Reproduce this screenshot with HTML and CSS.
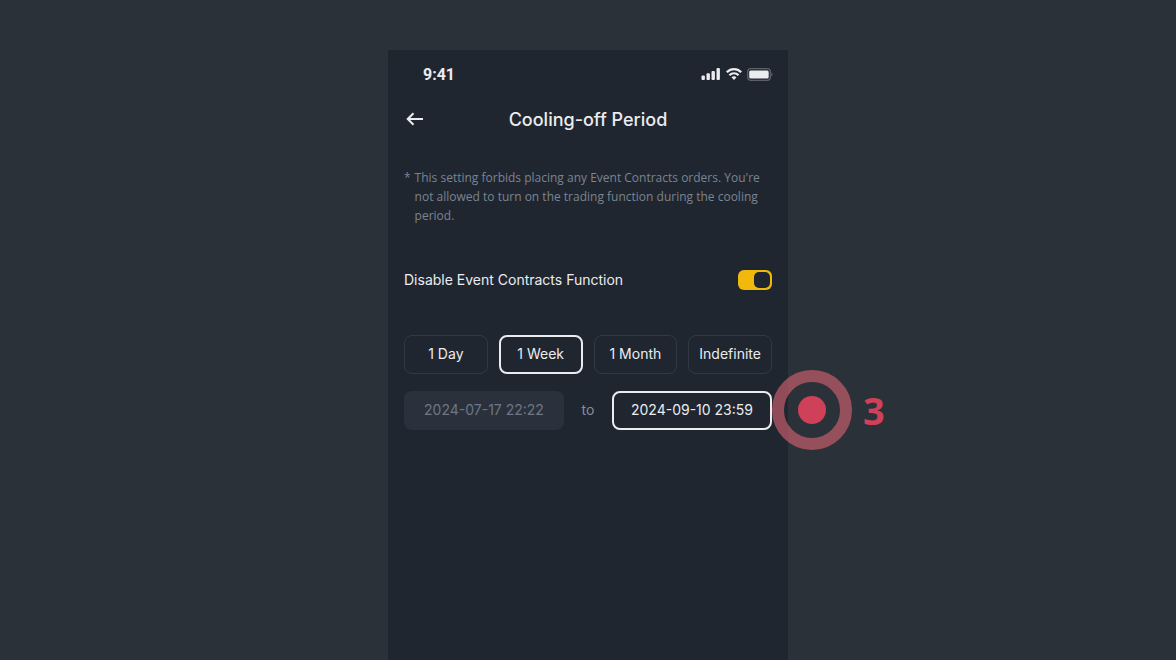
FILE: index.html
```html
<!DOCTYPE html>
<html lang="en">
<head>
    <meta charset="UTF-8">
    <meta name="viewport" content="width=device-width, initial-scale=1.0">
    <title>Cooling-off Period</title>
    <link rel="stylesheet" href="styles.css">
</head>
<body>
    <main class="phone">
        <div class="status-bar">
            <span class="time">9:41</span>
            <div class="status-icons">
                <svg width="20" height="12" viewBox="0 0 20 12" fill="currentColor" aria-hidden="true">
                    <rect x="0.5" y="7.5" width="3.4" height="4.5" rx="1"/>
                    <rect x="5.5" y="5.3" width="3.4" height="6.7" rx="1"/>
                    <rect x="10.5" y="3" width="3.4" height="9" rx="1"/>
                    <rect x="15.5" y="0" width="3.4" height="12" rx="1"/>
                </svg>
                <svg width="16" height="12" viewBox="0 0 16 12" fill="none" stroke="currentColor" stroke-width="2.2" aria-hidden="true">
                    <path d="M0.8 4.3C4.9 0.1 11.1 0.1 15.2 4.3"/>
                    <path d="M3.4 7.2C6 4.6 10 4.6 12.6 7.2"/>
                    <path d="M5.5 9.3C7 7.9 9 7.9 10.5 9.3L8 11.9Z" fill="currentColor" stroke="none"/>
                </svg>
                <svg width="26" height="13" viewBox="0 0 26 13" aria-hidden="true">
                    <rect x="0.7" y="0.7" width="22.6" height="11.6" rx="3" fill="none" stroke="#5c6068" stroke-width="1.3"/>
                    <rect x="2.2" y="2.5" width="19.5" height="8" rx="1.5" fill="currentColor"/>
                    <path d="M24.3 4.5C26 5.2 26 7.8 24.3 8.5Z" fill="#5c6068"/>
                </svg>
            </div>
        </div>

        <header class="title-bar">
            <button type="button" class="back-button" aria-label="Back">
                <svg width="18" height="14" viewBox="0 0 18 14" fill="none" stroke="currentColor" stroke-width="2" aria-hidden="true">
                    <path d="M17 7H2M7.5 1.2L1.7 7L7.5 12.8"/>
                </svg>
            </button>
            <h1>Cooling-off Period</h1>
        </header>

        <div class="note">
            <span>*</span>
            <p>This setting forbids placing any Event Contracts orders. You're not allowed to turn on the trading function during the cooling period.</p>
        </div>

        <div class="toggle-row">
            <label for="disable-function">Disable Event Contracts Function</label>
            <input type="checkbox" id="disable-function" class="toggle" checked>
        </div>

        <div class="period-options">
            <button type="button">1 Day</button>
            <button type="button" class="selected">1 Week</button>
            <button type="button">1 Month</button>
            <button type="button">Indefinite</button>
        </div>

        <div class="date-row">
            <input type="text" class="date" value="2024-07-17 22:22" aria-label="Start date" disabled>
            <span class="to">to</span>
            <input type="text" class="date date-end" value="2024-09-10 23:59" aria-label="End date">
            <div class="marker">
                <span class="ring"></span>
                <span class="step">3</span>
            </div>
        </div>
    </main>
</body>
</html>
```
FILE: styles.css
```css
:root {
    --page-color: #2b3138;
    --phone-color: #20262f;
    --text-color: #eaecef;
    --muted-color: #848e9c;
    --border-color: #333944;
    --yellow: #f0b90b;
    --red: #cf4158;
}

* {
    box-sizing: border-box;
}

body {
    margin: 0;
    padding-top: 50px;
    background-color: var(--page-color);
    color: var(--text-color);
    font-family: 'Inter', sans-serif;
    font-size: 14px;
}

button, input {
    font: inherit;
    color: inherit;
}

.phone {
    max-width: 400px;
    min-height: calc(100vh - 50px);
    margin: 0 auto;
    padding: 14px 16px;
    background-color: var(--phone-color);
}

/* --- Status Bar --- */
.status-bar {
    display: flex;
    justify-content: space-between;
    align-items: center;
    height: 20px;
    margin-right: -1px;
    padding-left: 19px;
}

.time {
    font-family: 'Roboto', sans-serif;
    font-size: 16px;
    font-weight: 700;
}

.status-icons {
    display: flex;
    align-items: center;
    gap: 5px;
}

/* --- Title --- */
.title-bar {
    display: grid;
    grid-template-columns: 24px 1fr 24px;
    align-items: center;
    height: 30px;
    margin-top: 20px;
}

.back-button {
    display: flex;
    padding: 2px;
    border: none;
    background: none;
    cursor: pointer;
}

h1 {
    margin: 0;
    font-size: 18px;
    font-weight: 500;
    text-align: center;
}

.note {
    display: flex;
    gap: 4px;
    margin-top: 34px;
    color: #7b8491;
    font-family: 'Open Sans', sans-serif;
    font-size: 12px;
    line-height: 19px;
}

.note p {
    margin: 0;
}

/* --- Toggle --- */
.toggle-row {
    display: flex;
    justify-content: space-between;
    align-items: center;
    height: 20px;
    margin-top: 45px;
}

.toggle-row label {
    padding-bottom: 2px;
}

.toggle {
    appearance: none;
    display: flex;
    justify-content: flex-end;
    width: 34px;
    height: 20px;
    margin: 0;
    padding: 2px;
    border-radius: 6px;
    background-color: var(--yellow);
    cursor: pointer;
}

.toggle::before {
    content: "";
    width: 16px;
    border-radius: 5px;
    background-color: var(--phone-color);
}

.toggle:not(:checked) {
    justify-content: flex-start;
    background-color: var(--border-color);
}

/* --- Period --- */
.period-options {
    display: grid;
    grid-template-columns: repeat(4, 1fr);
    gap: 11px;
    margin-top: 45px;
}

.period-options button {
    height: 39px;
    padding: 0 0 2px;
    border: 1px solid var(--border-color);
    border-radius: 8px;
    background: none;
    cursor: pointer;
}

.period-options .selected {
    border: 2px solid var(--text-color);
}

.date-row {
    position: relative;
    display: flex;
    justify-content: space-between;
    align-items: center;
    margin-top: 17px;
}

.date {
    width: 160px;
    height: 39px;
    padding: 0 0 2px;
    border: none;
    border-radius: 8px;
    background-color: #2b313c;
    text-align: center;
}

.date:disabled {
    color: #6d7785;
}

.date-end {
    border: 2px solid var(--text-color);
    background: none;
}

.to {
    padding-bottom: 2px;
    color: var(--muted-color);
}

/* Step marker sits over the right edge of the phone */
.marker {
    position: absolute;
    left: 100%;
    display: flex;
    align-items: center;
    gap: 11px;
    padding-bottom: 2px;
    color: var(--red);
}

.ring {
    display: flex;
    justify-content: center;
    align-items: center;
    width: 80px;
    height: 80px;
    border: 12px solid rgba(207, 97, 112, 0.65);
    border-radius: 50%;
}

.ring::before {
    content: "";
    width: 28px;
    height: 28px;
    border-radius: 50%;
    background-color: var(--red);
}

.step {
    font-family: 'Open Sans', sans-serif;
    font-size: 38px;
    font-weight: 700;
    line-height: 40px;
}
```
